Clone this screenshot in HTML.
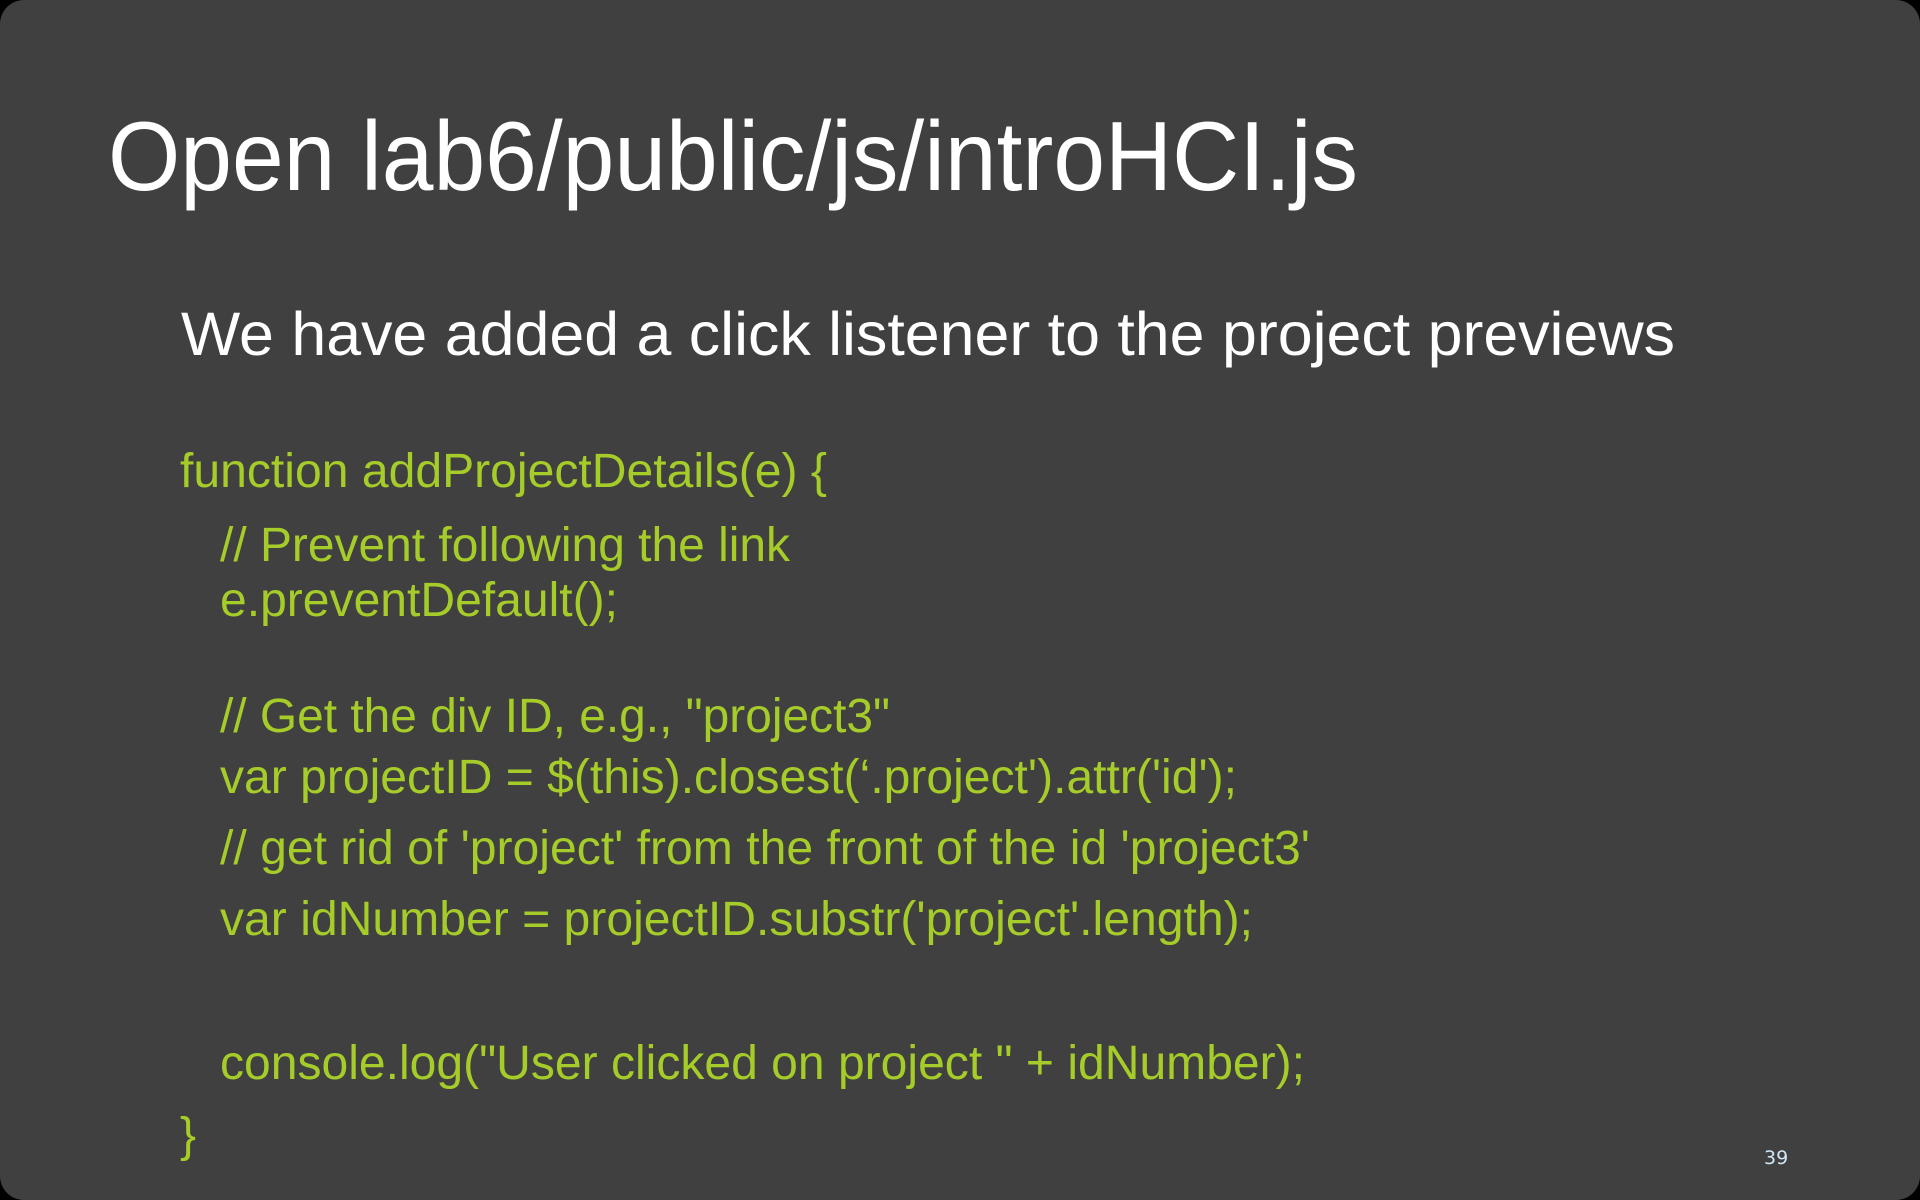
<!DOCTYPE html>
<html><head><meta charset="utf-8"><style>
html,body{margin:0;padding:0;background:#000;}
svg{display:block}
</style></head><body>
<svg width="1920" height="1200" viewBox="0 0 1920 1200" xmlns="http://www.w3.org/2000/svg">
<rect x="0" y="0" width="1920" height="1200" rx="24" ry="24" fill="#404040"/>
<g font-family="'Liberation Sans', sans-serif" fill="#ffffff">
<text x="108" y="190" font-size="98" textLength="1250" lengthAdjust="spacingAndGlyphs">Open lab6/public/js/introHCI.js</text>
<text x="181" y="355" font-size="61" textLength="1494" lengthAdjust="spacingAndGlyphs">We have added a click listener to the project previews</text>
</g>
<g font-family="'Liberation Sans', sans-serif" fill="#a6cc2a" font-size="48">
<text x="180" y="487" textLength="647" lengthAdjust="spacingAndGlyphs">function addProjectDetails(e) {</text>
<text x="220" y="561" textLength="570" lengthAdjust="spacingAndGlyphs">// Prevent following the link</text>
<text x="220" y="616" textLength="398" lengthAdjust="spacingAndGlyphs">e.preventDefault();</text>
<text x="220" y="732" textLength="670" lengthAdjust="spacingAndGlyphs">// Get the div ID, e.g., "project3"</text>
<text x="220" y="793" textLength="1017" lengthAdjust="spacingAndGlyphs">var projectID = $(this).closest(‘.project').attr('id');</text>
<text x="220" y="864" textLength="1090" lengthAdjust="spacingAndGlyphs">// get rid of 'project' from the front of the id 'project3'</text>
<text x="220" y="935" textLength="1033" lengthAdjust="spacingAndGlyphs">var idNumber = projectID.substr('project'.length);</text>
<text x="220" y="1079" textLength="1085" lengthAdjust="spacingAndGlyphs">console.log("User clicked on project " + idNumber);</text>
<text x="180" y="1151">}</text>
</g>
<text x="1764" y="1164" font-family="'DejaVu Sans', sans-serif" font-size="19" fill="#cfe6f5">39</text>
</svg>
</body></html>
